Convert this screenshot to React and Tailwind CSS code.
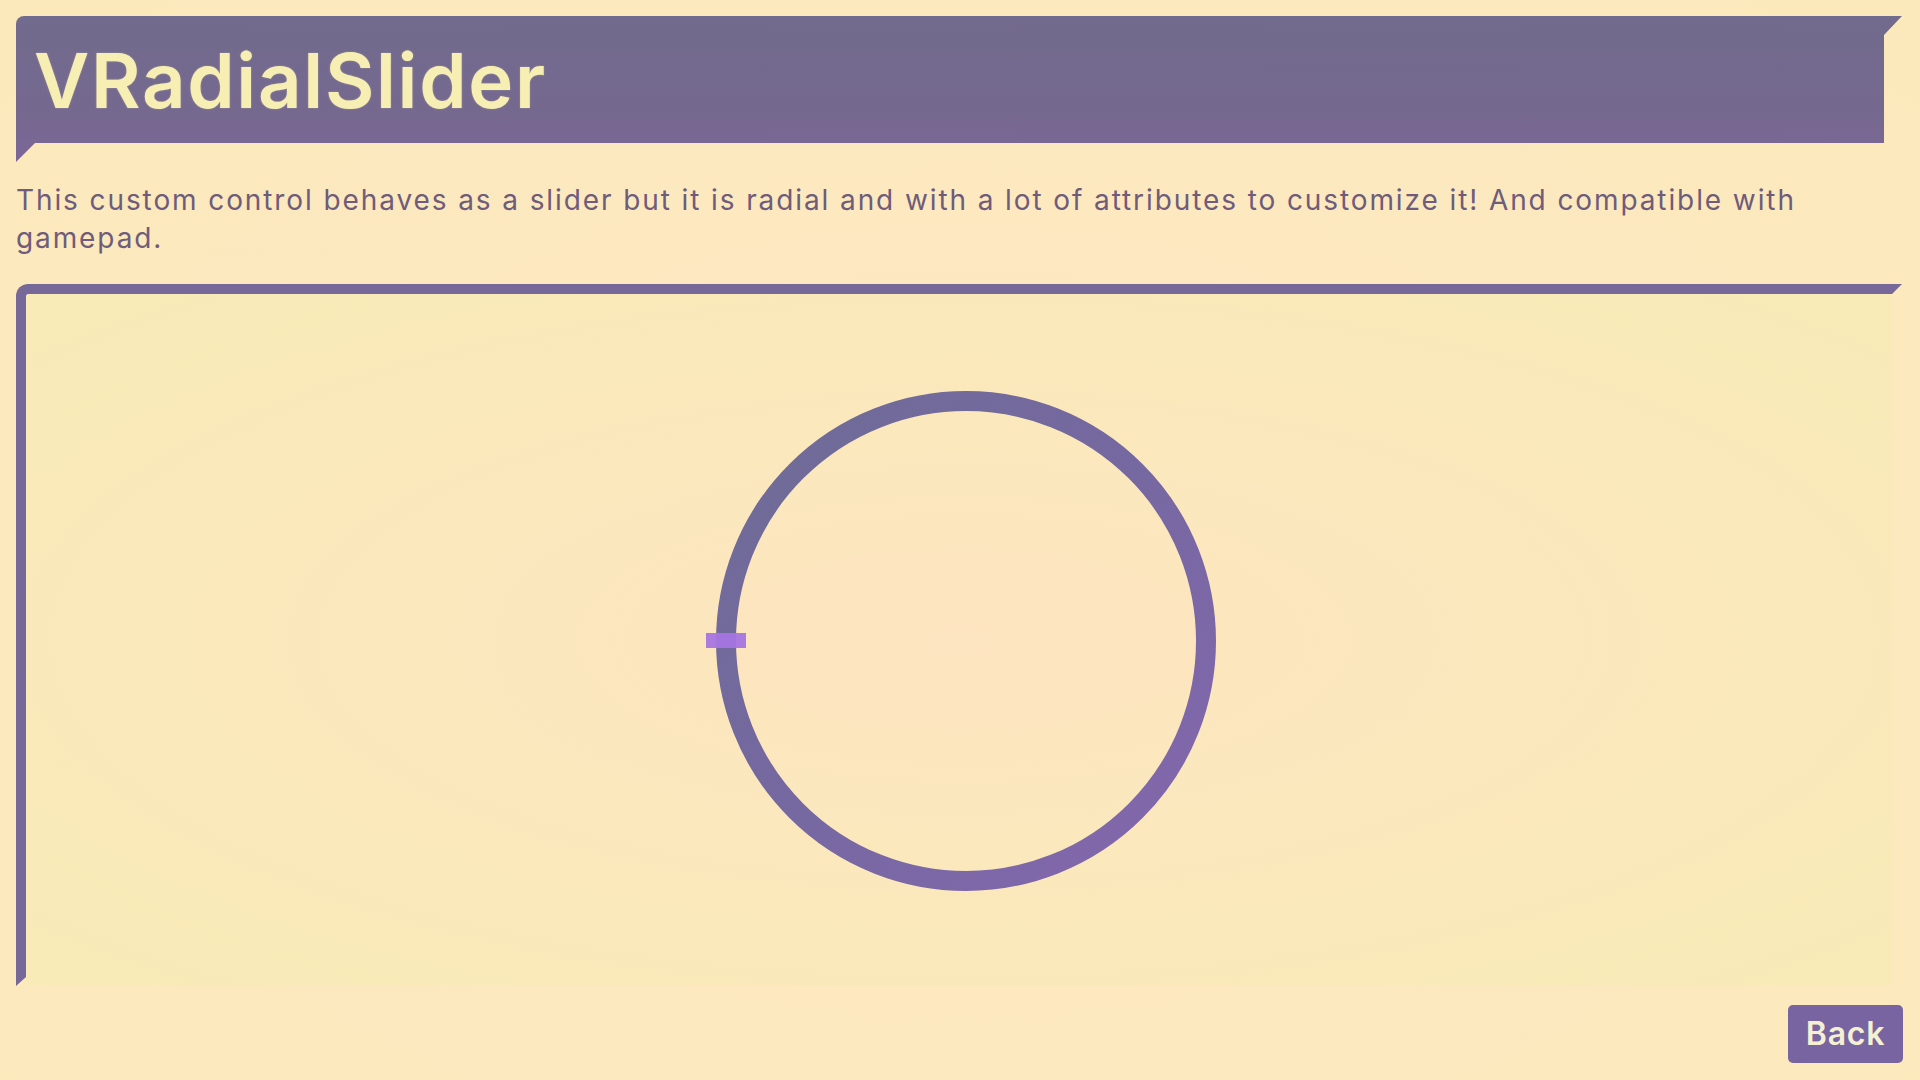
export default function App() {
  return (
    <div
      className="w-[1920px] h-[1080px] overflow-hidden flex flex-col pt-4 pl-4 pr-[17px] bg-[#fde8c0] bg-[radial-gradient(ellipse_at_50%_55%,#fee3c4_0%,#fde8c0_45%,#fbe9bb_100%)]"
      style={{ fontFamily: "Inter, 'Noto Sans', sans-serif" }}
    >
      {/* Header */}
      <div className="h-[146px] w-[1886px] shrink-0 rounded-tl-[8px] bg-[linear-gradient(180deg,#716b8d_0%,#76688f_70%,#7c6699_100%)] [clip-path:polygon(0_0,100%_0,calc(100%_-_18px)_19px,calc(100%_-_18px)_127px,19px_127px,0_146px)]">
        <div className="h-[127px] flex items-center pl-[18px]">
          <h1 className="text-[76px] font-semibold leading-none tracking-[1.7px] text-[#f7eeb4] [text-shadow:0_0_2px_rgba(240,230,170,0.4)]">
            VRadialSlider
          </h1>
        </div>
      </div>

      {/* Description */}
      <p className="mt-[19px] text-[28px] leading-[38px] tracking-[1.9px] text-[#6e5c7a] w-[1886px]">
        This custom control behaves as a slider but it is radial and with a lot of attributes to customize it! And compatible with gamepad.
      </p>

      {/* Panel */}
      <div className="mt-[27px] h-[702px] w-[1886px] shrink-0 relative rounded-tl-[12px] border-t-[10px] border-l-[10px] border-[#76699a] bg-[#f9ebb9] bg-[radial-gradient(ellipse_at_50%_50%,#fde4c0_0%,#fbe8bd_40%,#f8ebb7_100%)] [clip-path:polygon(0_0,100%_0,calc(100%_-_10px)_10px,calc(100%_-_10px)_100%,10px_100%,10px_calc(100%_-_9px),0_100%)] flex items-center justify-center">
        <div className="relative w-[500px] h-[500px] ml-[4px] mt-[2px]">
          <svg width="500" height="500" viewBox="0 0 500 500" className="absolute inset-0">
            <defs>
              <linearGradient id="ring" x1="0" y1="0" x2="1" y2="1">
                <stop offset="0%" stopColor="#6e6c96" />
                <stop offset="50%" stopColor="#7668a1" />
                <stop offset="100%" stopColor="#8467ae" />
              </linearGradient>
            </defs>
            <circle cx="250" cy="250" r="240" fill="none" stroke="url(#ring)" strokeWidth="20" />
          </svg>
          <div className="absolute left-[-10px] top-[242px] w-[40px] h-[15px] bg-[#a675e2] opacity-95" />
        </div>
      </div>

      {/* Footer */}
      <div className="mt-[19px] flex justify-end">
        <button className="w-[115px] h-[58px] rounded-[5px] bg-[#7864a0] text-[#f5f0d2] text-[32px] font-semibold tracking-[0.8px] flex items-center justify-center">
          Back
        </button>
      </div>
    </div>
  );
}
